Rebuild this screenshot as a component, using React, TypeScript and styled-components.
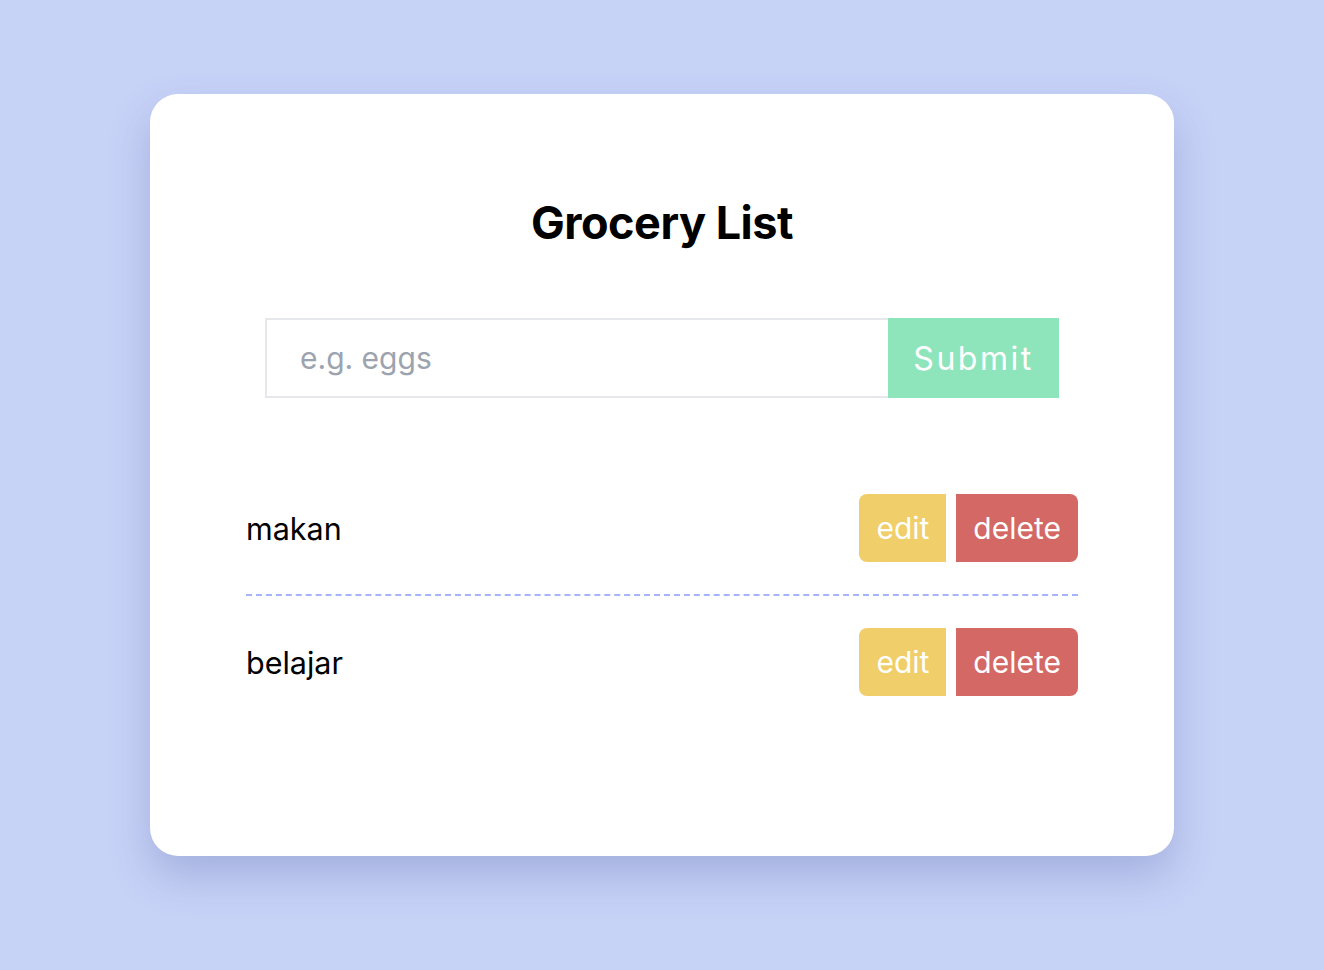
import styled, { createGlobalStyle } from "styled-components";
import { useState } from "react";

const GlobalStyle = createGlobalStyle`
  * {
    box-sizing: border-box;
  }

  body {
    margin: 0;
    background: #c7d2f7;
    font-family: Inter, "Noto Sans", sans-serif;
    color: #000;
  }
`;

const Page = styled.main`
  min-height: 970px;
  padding-top: 94px;
  display: flex;
  justify-content: center;
  align-items: flex-start;
`;

const Card = styled.section`
  width: 1024px;
  height: 762px;
  background: #fff;
  border-radius: 28px;
  box-shadow: 0 20px 40px rgba(60, 80, 150, 0.25);
  padding: 99px 96px 0;
  display: flex;
  flex-direction: column;
  align-items: center;
`;

const Title = styled.h1`
  margin: 0;
  font-size: 45px;
  font-weight: 700;
  letter-spacing: -0.5px;
  line-height: 60px;
`;

const Form = styled.form`
  display: flex;
  margin-top: 65px;
  width: 794px;
`;

const Input = styled.input`
  flex: 1;
  height: 80px;
  border: 2px solid #e5e7eb;
  border-right: none;
  padding: 0 33px;
  font-family: inherit;
  font-size: 30px;
  outline: none;

  &::placeholder {
    color: #9ca3af;
  }
`;

const SubmitButton = styled.button`
  width: 171px;
  height: 80px;
  border: none;
  background: #8ee5bb;
  color: #fff;
  font-family: inherit;
  font-size: 32px;
  letter-spacing: 2.5px;
  cursor: pointer;
`;

const List = styled.ul`
  list-style: none;
  margin: 64px 0 0;
  padding: 0;
  width: 832px;
`;

const Row = styled.li`
  display: flex;
  align-items: center;
  justify-content: space-between;
  padding: 32px 0;

  &:not(:last-child) {
    border-bottom: 2px dashed #a5b4fc;
  }
`;

const ItemName = styled.span`
  font-size: 30.5px;
`;

const Actions = styled.div`
  display: flex;
  gap: 10px;
`;

type ActionProps = { $variant: "edit" | "delete" };

const ActionButton = styled.button<ActionProps>`
  height: 68px;
  padding: 0 17px;
  border: none;
  font-family: inherit;
  font-size: 30px;
  color: #fff;
  cursor: pointer;
  background: ${(p) => (p.$variant === "edit" ? "#f0ce6a" : "#d36864")};
  border-radius: ${(p) => (p.$variant === "edit" ? "8px 0 0 8px" : "0 8px 8px 0")};
`;

function App() {
  const [items] = useState<string[]>(["makan", "belajar"]);

  return (
    <>
      <GlobalStyle />
      <Page>
        <Card>
          <Title>Grocery List</Title>
          <Form onSubmit={(e) => e.preventDefault()}>
            <Input placeholder="e.g. eggs" />
            <SubmitButton type="submit">Submit</SubmitButton>
          </Form>
          <List>
            {items.map((item) => (
              <Row key={item}>
                <ItemName>{item}</ItemName>
                <Actions>
                  <ActionButton $variant="edit">edit</ActionButton>
                  <ActionButton $variant="delete">delete</ActionButton>
                </Actions>
              </Row>
            ))}
          </List>
        </Card>
      </Page>
    </>
  );
}

export default App;
